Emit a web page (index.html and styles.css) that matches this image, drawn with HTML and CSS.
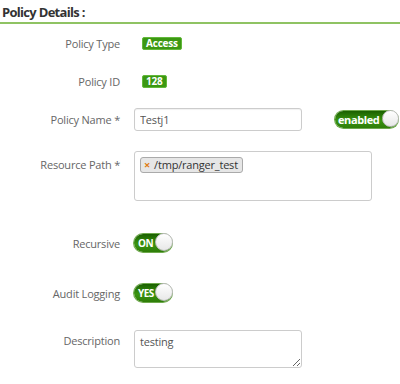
FILE: index.html
```html
<!DOCTYPE html>
<html lang="en">
<head>
    <meta charset="UTF-8">
    <title>Policy Details</title>
    <link rel="stylesheet" href="styles.css">
</head>
<body>
    <div class="section-title">Policy Details :</div>

    <div class="form-row">
        <label class="field-label">Policy Type</label>
        <div class="field"><span class="badge">Access</span></div>
    </div>

    <div class="form-row">
        <label class="field-label">Policy ID</label>
        <div class="field"><span class="badge">128</span></div>
    </div>

    <div class="form-row">
        <label class="field-label">Policy Name *</label>
        <div class="field">
            <input type="text" class="text-input" value="Testj1">
            <span class="toggle toggle-wide">enabled<span class="knob"></span></span>
        </div>
    </div>

    <div class="form-row row-top row-resource">
        <label class="field-label">Resource Path *</label>
        <div class="field">
            <div class="tag-box">
                <span class="tag"><span class="tag-x">×</span>/tmp/ranger_test</span>
            </div>
        </div>
    </div>

    <div class="form-row row-recursive">
        <label class="field-label">Recursive</label>
        <div class="field"><span class="toggle">ON<span class="knob"></span></span></div>
    </div>

    <div class="form-row row-audit">
        <label class="field-label">Audit Logging</label>
        <div class="field"><span class="toggle">YES<span class="knob"></span></span></div>
    </div>

    <div class="form-row row-top row-desc">
        <label class="field-label">Description</label>
        <div class="field">
            <textarea class="text-area">testing</textarea>
        </div>
    </div>
</body>
</html>
```

FILE: styles.css
```css
body {
    margin: 0;
    padding: 0 2px;
    font-family: "Open Sans", "Noto Sans", sans-serif;
    font-size: 11px;
    letter-spacing: -0.2px;
    color: #555;
    background: #fff;
}

.section-title {
    font-size: 13px;
    font-weight: bold;
    letter-spacing: -0.7px;
    color: #333;
    height: 22px;
    line-height: 24px;
    border-bottom: 2px solid #8fc363;
    margin: 0 -2px;
    padding-left: 2px;
}

.form-row {
    display: flex;
    align-items: center;
    height: 38px;
}

.row-top {
    align-items: flex-start;
}

.field-label {
    width: 118px;
    text-align: right;
    color: #666;
    flex-shrink: 0;
}

.field {
    margin-left: 14px;
    display: flex;
    align-items: center;
}

.badge {
    margin-left: 8px;
    background: #3b9812;
    border: 1px solid #62b83a;
    color: #fff;
    font-weight: bold;
    font-size: 10px;
    line-height: 11px;
    padding: 0 3px;
    border-radius: 2px;
}

.text-input {
    width: 156px;
    height: 21px;
    padding: 0 5px;
    border: 1px solid #ccc;
    border-radius: 3px;
    font-family: inherit;
    font-size: 11px;
    letter-spacing: -0.2px;
    color: #555;
    box-shadow: inset 0 1px 1px rgba(0, 0, 0, 0.06);
}

.toggle {
    position: relative;
    display: inline-flex;
    align-items: center;
    height: 18px;
    width: 38px;
    box-sizing: border-box;
    padding-left: 4px;
    border-radius: 9px;
    background: linear-gradient(#1a6000, #3a9410 55%, #2e7d08);
    color: #fff;
    font-weight: bold;
    font-size: 10px;
    letter-spacing: -0.5px;
    box-shadow: 0 0 0 1px #6ea94c;
}

.toggle-wide {
    width: 63px;
    height: 17px;
    margin-left: 33px;
    font-size: 11px;
    letter-spacing: -0.4px;
    padding-left: 3px;
}

.knob {
    position: absolute;
    right: -1px;
    top: -1px;
    width: 18px;
    height: 18px;
    border-radius: 50%;
    background: linear-gradient(#fff, #e8e8e8);
    border: 1px solid #bdbdbd;
    box-sizing: border-box;
}

.toggle-wide .knob {
    width: 17px;
    height: 17px;
}

.row-resource {
    height: 50px;
    margin-top: 13px;
}

.row-resource .field-label {
    margin-top: 6px;
}

.tag-box {
    width: 238px;
    height: 50px;
    box-sizing: border-box;
    border: 1px solid #ccc;
    border-radius: 3px;
    padding: 5px 5px;
}

.tag {
    display: inline-block;
    background: #e6e6e6;
    border: 1px solid #aaa;
    border-radius: 3px;
    padding: 0 4px 0 3px;
    line-height: 14px;
    color: #333;
    font-size: 11px;
}

.tag-x {
    color: #e07b10;
    font-weight: bold;
    margin-right: 4px;
}

.row-recursive {
    margin-top: 23px;
}

.row-audit {
    margin-top: 12px;
}

.row-desc {
    margin-top: 18px;
    height: 40px;
}

.row-desc .field-label {
    margin-top: 3px;
}

.text-area {
    width: 168px;
    height: 38px;
    box-sizing: border-box;
    border: 1px solid #ccc;
    border-radius: 3px;
    padding: 3px 5px;
    font-family: inherit;
    font-size: 11px;
    letter-spacing: -0.2px;
    color: #555;
    margin: 0;
}
```
